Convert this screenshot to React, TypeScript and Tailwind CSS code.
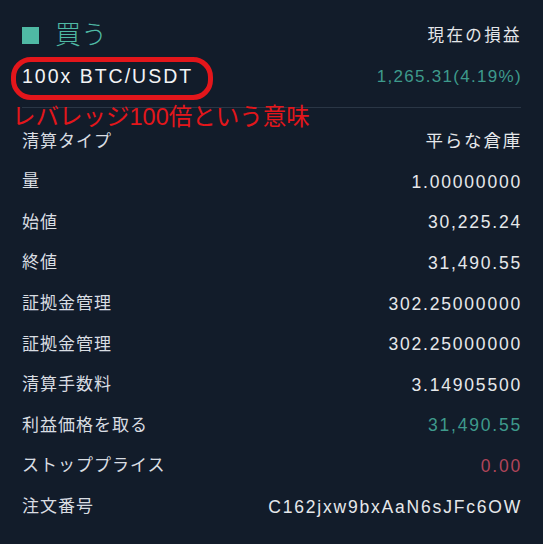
const font = { fontFamily: '"Liberation Sans", "Noto Sans CJK JP", sans-serif' }

type Row = { label: string; value: string; tone?: 'up' | 'down' }

const rows: Row[] = [
  { label: '清算タイプ', value: '平らな倉庫' },
  { label: '量', value: '1.00000000' },
  { label: '始値', value: '30,225.24' },
  { label: '終値', value: '31,490.55' },
  { label: '証拠金管理', value: '302.25000000' },
  { label: '証拠金管理', value: '302.25000000' },
  { label: '清算手数料', value: '3.14905500' },
  { label: '利益価格を取る', value: '31,490.55', tone: 'up' },
  { label: 'ストッププライス', value: '0.00', tone: 'down' },
  { label: '注文番号', value: 'C162jxw9bxAaN6sJFc6OW' },
]

export default function App() {
  return (
    <div
      className="relative w-[543px] h-[544px] overflow-hidden bg-[#121c2a] pl-[22px] pr-[21px] pt-[20px]"
      style={font}
    >
      <div className="flex h-[30px] items-center justify-between">
        <div className="flex items-center gap-[16px]">
          <span className="block h-[17px] w-[17px] bg-[#4fb9a4]" />
          <span className="text-[26px] font-light leading-none text-[#4fb9a4]">買う</span>
        </div>
        <span className="text-[16.5px] tracking-[2.4px] text-[#e4e6e9]">現在の損益</span>
      </div>

      <div className="mt-[12px] flex h-[30px] items-center justify-between">
        <span className="text-[19.5px] tracking-[2px] text-[#f2f3f5]">100x BTC/USDT</span>
        <span className="text-[17px] tracking-[1.3px] text-[#3e9a8c]">1,265.31(4.19%)</span>
      </div>

      <div className="mt-[15px] mr-[1px] h-px bg-[#2a3645]" />

      <div className="pt-[13px]">
        {rows.map((r, i) => (
          <div key={i} className="flex h-[40.6px] items-center justify-between">
            <span className="text-[17px] tracking-[1px] text-[#d9dde2]">{r.label}</span>
            <span
              className={
                'text-[17.5px] tracking-[1.8px] ' +
                (r.tone === 'up'
                  ? 'text-[#3e9a8c]'
                  : r.tone === 'down'
                  ? 'text-[#b0455a]'
                  : 'text-[#e6e8eb]')
              }
            >
              {r.value}
            </span>
          </div>
        ))}
      </div>

      {/* annotation overlay */}
      <div className="pointer-events-none absolute left-[11px] top-[57px] h-[43px] w-[202px] rounded-[20px] border-[5px] border-[#e3161b]" />
      <div className="pointer-events-none absolute left-[12px] top-[103px] text-[23.5px] leading-[28px] text-[#e3161b]">
        レバレッジ100倍という意味
      </div>
    </div>
  )
}
